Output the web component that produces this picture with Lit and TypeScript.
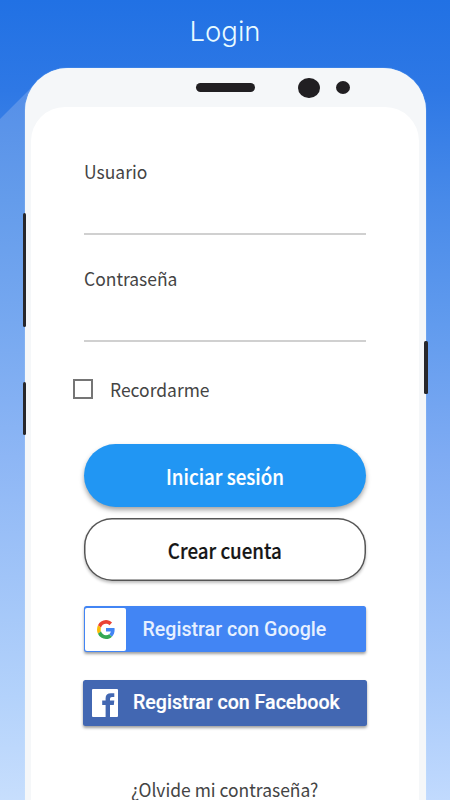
import { LitElement, html, css } from "lit";
import { customElement } from "lit/decorators.js";

@customElement("app-root")
class AppRoot extends LitElement {
  static styles = css`
    :host {
      display: block;
      width: 450px;
      height: 800px;
      overflow: hidden;
      position: relative;
      background: linear-gradient(#2171e4 0, #2e78e5 90px, #488ae9 200px, #619bee 325px, #7eabf3 455px, #a9cafa 690px, #c1dafe 800px);
      font-family: "Noto Sans CJK SC", "Noto Sans", sans-serif;
      color: #444;
    }
    * { box-sizing: border-box; }
    .beam {
      position: absolute;
      left: 0;
      top: 87px;
      width: 60px;
      height: 713px;
      clip-path: polygon(0 32px, 32px 0, 60px 0, 60px 100%, 0 100%);
      background: linear-gradient(#558fe8 0, #649ceb 113px, #76a8f0 235px, #8db6f5 370px, #b3d2fb 610px, #c7defd 713px);
    }
    .title {
      position: relative;
      height: 68px;
      margin: 0;
      text-align: center;
      font: 300 27.5px/62px Inter, sans-serif;
      color: #e9fbff;
    }
    .phone {
      position: relative;
      width: 401px;
      height: 760px;
      margin-left: 25px;
      padding: 39px 7px 0 6px;
      border-radius: 43px 43px 0 0;
      background: #f5f7f9;
      box-shadow: 0 0 1px #d4edff;
    }
    .hardware { position: absolute; background: #211f22; }
    .speaker { left: 171px; top: 15px; width: 59px; height: 9px; border-radius: 4.5px; }
    .camera { left: 273px; top: 9.5px; width: 22px; height: 20.5px; border-radius: 50%; }
    .sensor { left: 311px; top: 13px; width: 14px; height: 13px; border-radius: 50%; }
    .key { width: 3px; border-radius: 1.5px; background: #27272b; }
    .volume { left: -2px; top: 145px; height: 114px; }
    .assist { left: -2px; top: 314px; height: 53px; }
    .power { left: 399px; top: 272.5px; height: 53px; width: 3.5px; }
    .screen {
      height: 720px;
      padding: 52px 53px 0;
      border-radius: 34px 34px 0 0;
      background: #fff;
      display: flex;
      flex-direction: column;
    }
    .field {
      height: 76px;
      flex: none;
      margin-bottom: 31px;
      border-bottom: 2px solid #d0d0d0;
    }
    .label, .forgot {
      display: block;
      font-size: 18.5px;
      line-height: 24px;
      white-space: nowrap;
      transform: scaleX(0.944);
      transform-origin: left;
    }
    .remember {
      display: flex;
      align-items: center;
      gap: 16.5px;
      height: 24px;
      margin: 4px 0 0 -11px;
    }
    .box { width: 20px; height: 20px; border: 2px solid #757575; }
    .pill {
      display: flex;
      align-items: center;
      justify-content: center;
      flex: none;
      width: 282px;
      height: 63px;
      font: inherit;
      font-size: 21px;
      font-weight: 500;
      padding: 0;
      border-radius: 31.5px;
      white-space: nowrap;
    }
    .pill span { transform: scaleX(0.893); -webkit-text-stroke: 0.2px currentColor; }
    .primary {
      margin-top: 43px;
      border: 0;
      background: #2196f3;
      color: #fff;
      box-shadow: 0 3px 5px rgba(0, 0, 0, 0.36);
    }
    .outline {
      margin-top: 11px;
      border: 0;
      border-radius: 28px;
      background: #fff;
      color: #161616;
      box-shadow: inset 0 0 0 1.5px #555, 0 2px 3px rgba(0, 0, 0, 0.25);
    }
    .social {
      display: flex;
      align-items: center;
      flex: none;
      height: 46px;
      padding: 0;
      border: 0;
      border-radius: 2.5px;
      font: 500 19.6px/46px Roboto, sans-serif;
      color: #fff;
      white-space: nowrap;
      box-shadow: 0 2px 3px rgba(0, 0, 0, 0.38);
    }
    .google { width: 282px; margin-top: 25px; background: #4285f4; color: #e6f0ff; }
    .google .caption { padding-top: 2px; }
    .facebook { width: 284px; margin: 28px 0 0 -1px; background: #4267b2; }
    .facebook .caption { -webkit-text-stroke: 0.2px currentColor; }
    .tile {
      display: grid;
      place-items: center;
      width: 41px;
      height: 43px;
      margin: 0 16.5px 0 1px;
      border-radius: 2px;
      background: #fff;
    }
    .fb { margin: 0 15px 0 9px; }
    .forgot { margin: 51px 0 0 47px; }
    svg { display: block; }
  `;

  render() {
    return html`
      <div class="beam"></div>
      <h1 class="title">Login</h1>
      <div class="phone">
        <span class="hardware speaker"></span>
        <span class="hardware camera"></span>
        <span class="hardware sensor"></span>
        <span class="hardware key volume"></span>
        <span class="hardware key assist"></span>
        <span class="hardware key power"></span>
        <div class="screen">
          <div class="field"><span class="label">Usuario</span></div>
          <div class="field"><span class="label">Contraseña</span></div>
          <div class="remember"><span class="box"></span><span class="label">Recordarme</span></div>
          <button class="pill primary"><span>Iniciar sesión</span></button>
          <button class="pill outline"><span>Crear cuenta</span></button>
          <button class="social google">
            <span class="tile">
              <svg width="18" height="19" viewBox="0 0 48 48" preserveAspectRatio="none">
                <path fill="#EA4335" d="M24 9.5c3.54 0 6.71 1.22 9.21 3.6l6.85-6.85C35.9 2.38 30.47 0 24 0 14.62 0 6.51 5.38 2.56 13.22l7.98 6.19C12.43 13.72 17.74 9.5 24 9.5z"/>
                <path fill="#4285F4" d="M46.98 24.55c0-1.57-.15-3.09-.38-4.55H24v9.02h12.94c-.58 2.96-2.26 5.48-4.78 7.18l7.73 6c4.51-4.18 7.09-10.36 7.09-17.65z"/>
                <path fill="#FBBC05" d="M10.53 28.59A14.5 14.5 0 0 1 9.77 24c0-1.6.27-3.14.76-4.59l-7.98-6.19A23.9 23.9 0 0 0 0 24c0 3.88.92 7.54 2.56 10.78z"/>
                <path fill="#34A853" d="M24 48c6.48 0 11.93-2.13 15.89-5.81l-7.73-6c-2.15 1.45-4.92 2.3-8.16 2.3-6.26 0-11.57-4.22-13.47-9.91l-7.98 6.19C6.51 42.62 14.62 48 24 48z"/>
              </svg>
            </span>
            <span class="caption">Registrar con Google</span>
          </button>
          <button class="social facebook">
            <svg class="fb" width="26" height="28" viewBox="0 0 26 28">
              <path fill="#fff" d="M1 0H25Q26 0 26 1V27Q26 28 25 28H18V16H21.8L22.3 11.6H18V9.8Q18 8 20 8H22.3V4.2H19Q13.6 4.2 13.6 9.2V11.6H10.2V16H13.6V28H1Q0 28 0 27V1Q0 0 1 0Z"/>
            </svg>
            <span class="caption">Registrar con Facebook</span>
          </button>
          <span class="forgot">¿Olvide mi contraseña?</span>
        </div>
      </div>
    `;
  }
}
